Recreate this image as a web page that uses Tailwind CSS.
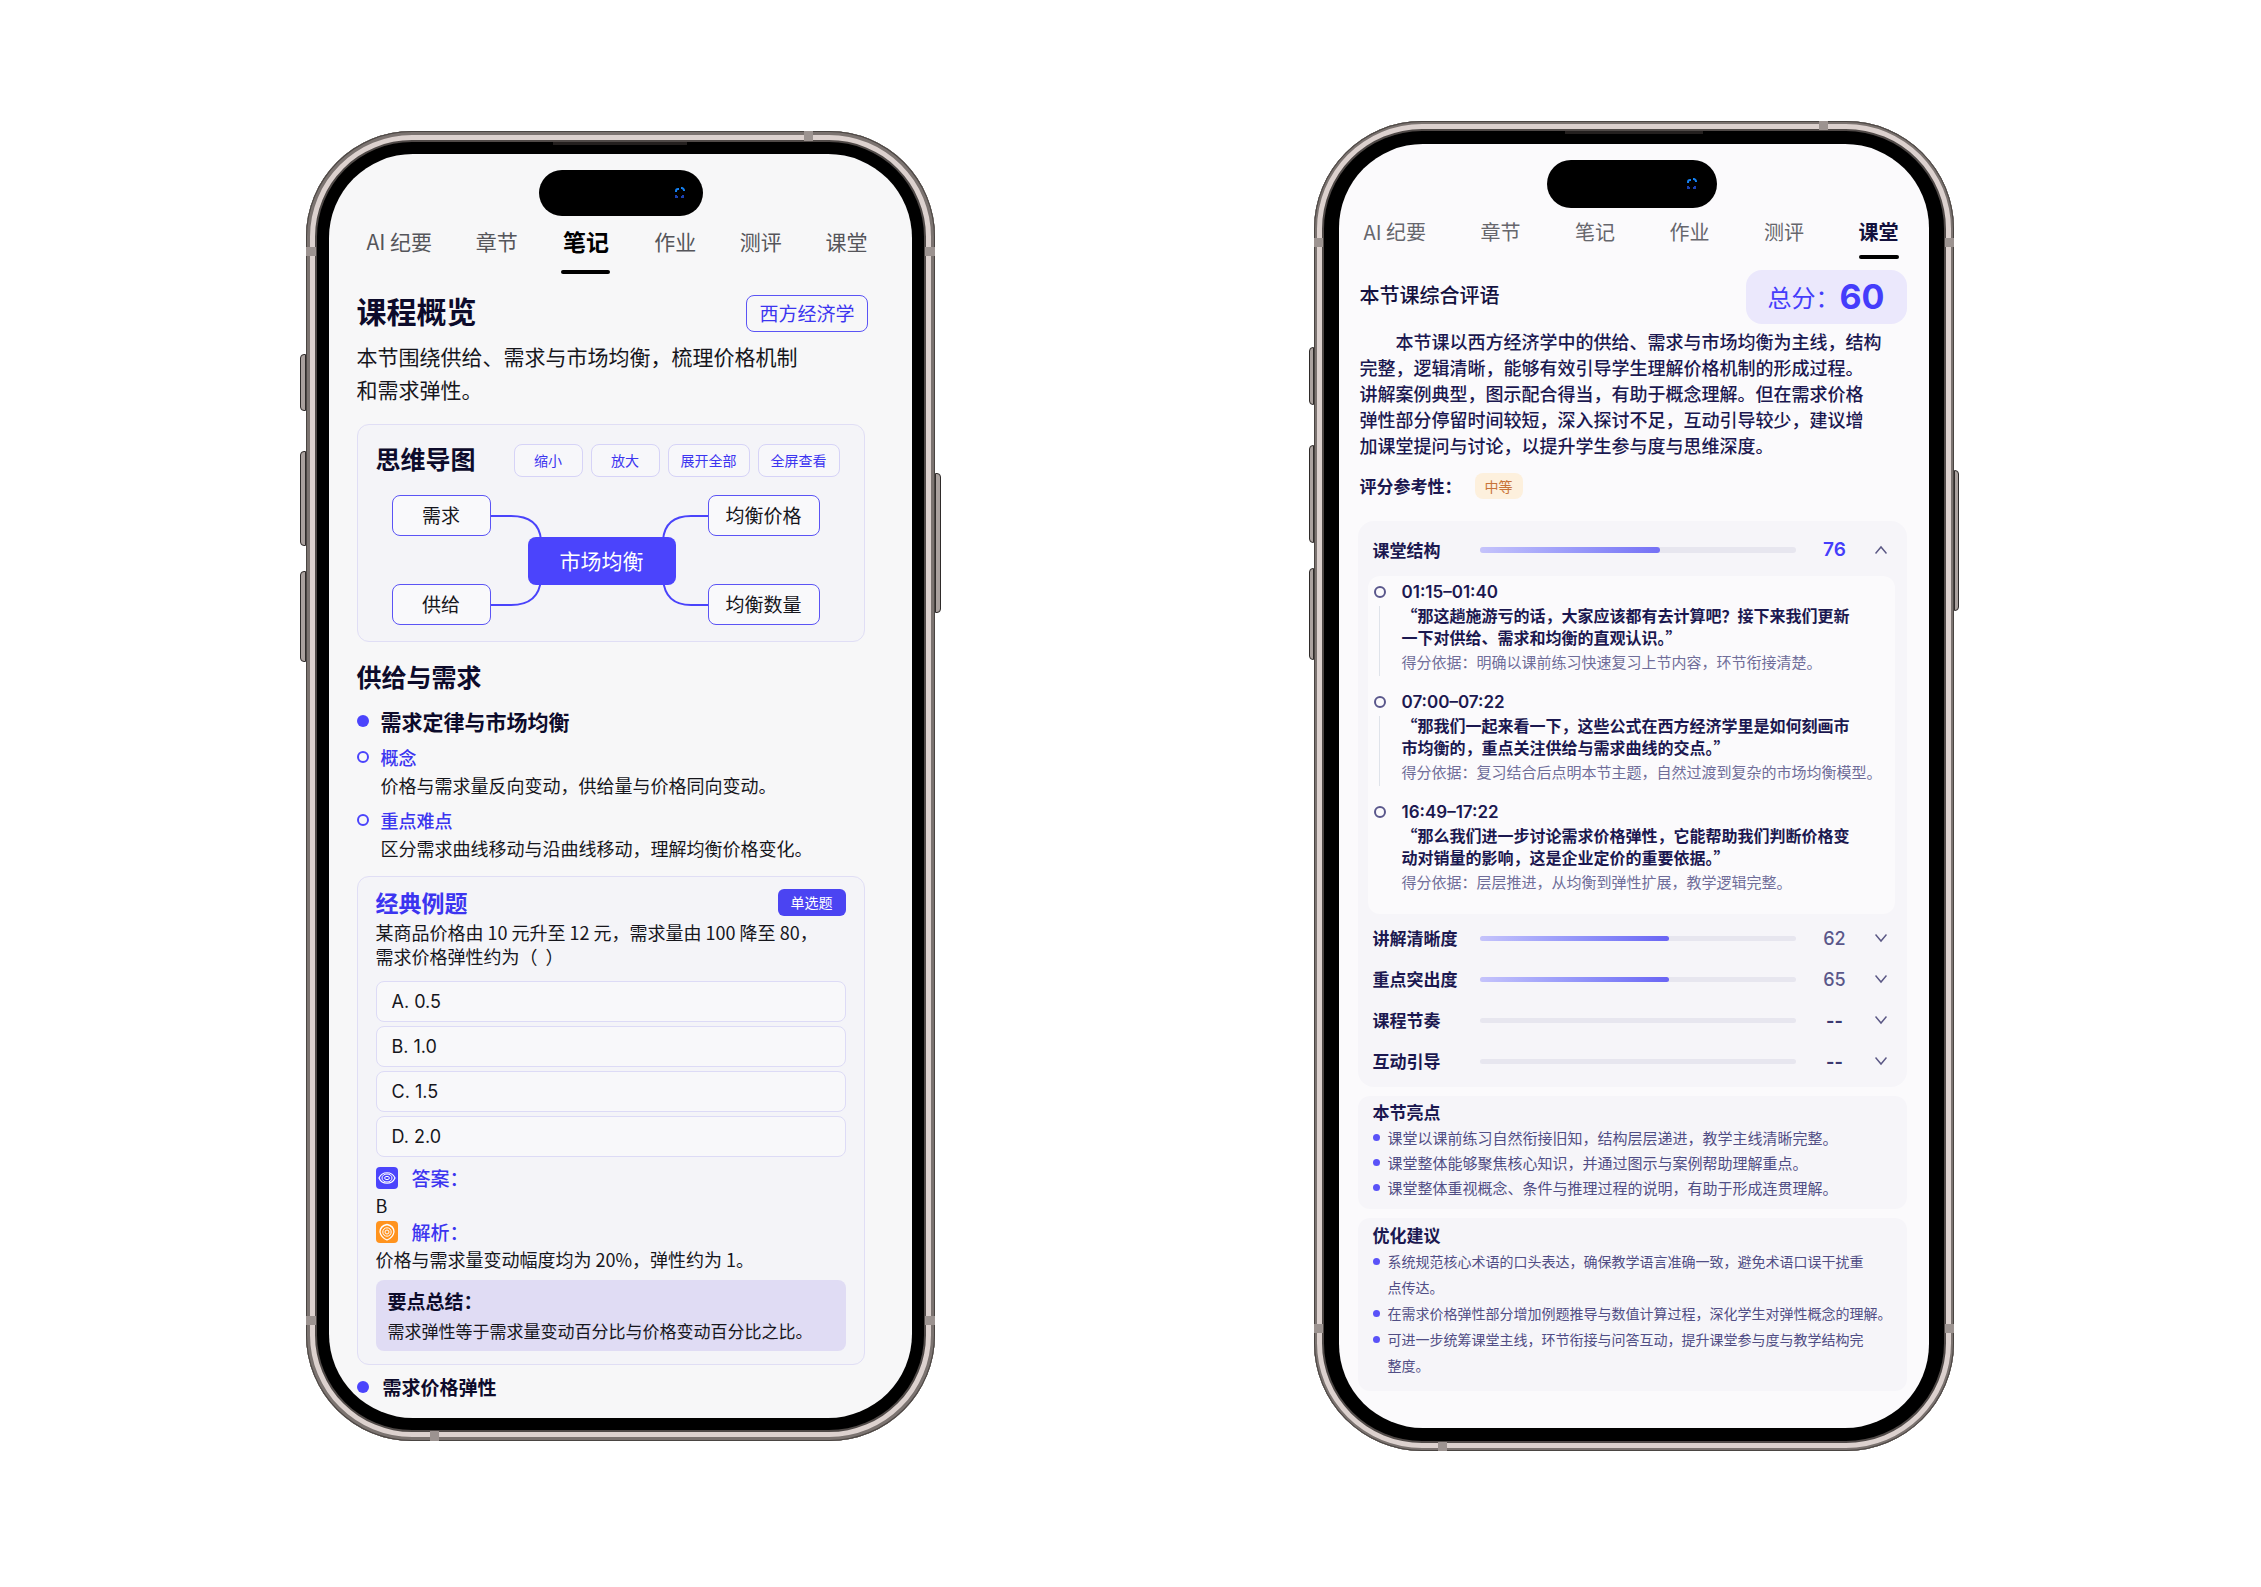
<!DOCTYPE html>
<html lang="zh-CN">
<head>
<meta charset="UTF-8">
<meta name="viewport" content="width=device-width, initial-scale=1.0">
<title>课程笔记与课堂测评</title>
<script src="https://cdn.jsdelivr.net/npm/@tailwindcss/browser@4"></script>
</head>
<body class="bg-white min-h-screen flex justify-center items-center gap-[379px] pb-4 pr-0.5 font-['Noto_Sans_CJK_SC',sans-serif] text-[#16161c]">

<!-- Phone 1: notes -->
<div class="relative w-[629px] shrink-0 rounded-[106px] bg-black p-[23px] shadow-[inset_0_0_0_1px_#4a4542,inset_0_0_0_4px_#7b7370,inset_0_0_0_9px_#dcd1ce,inset_0_0_0_11px_#4f4947]">
  <span class="absolute -left-[6px] top-[223px] w-[6px] h-[57px] rounded-l border border-[#2f2b2a] bg-[#aaa19e]"></span>
  <span class="absolute -left-[6px] top-[320px] w-[6px] h-[95px] rounded-l border border-[#2f2b2a] bg-[#aaa19e]"></span>
  <span class="absolute -left-[6px] top-[440px] w-[6px] h-[91px] rounded-l border border-[#2f2b2a] bg-[#aaa19e]"></span>
  <span class="absolute -right-[6px] top-[342px] w-[6px] h-[140px] rounded-r border border-[#2f2b2a] bg-[#aaa19e]"></span>
  <!-- antenna lines -->
  <span class="absolute left-0 top-[116px] w-[10px] h-[9px] bg-[#9c9390]"></span>
  <span class="absolute right-0 top-[116px] w-[10px] h-[9px] bg-[#9c9390]"></span>
  <span class="absolute left-0 bottom-[116px] w-[10px] h-[9px] bg-[#9c9390]"></span>
  <span class="absolute right-0 bottom-[116px] w-[10px] h-[9px] bg-[#9c9390]"></span>
  <span class="absolute right-[122px] top-0 w-[9px] h-[10px] bg-[#9c9390]"></span>
  <span class="absolute left-[124px] bottom-0 w-[9px] h-[10px] bg-[#9c9390]"></span>
  <span class="absolute left-1/2 -translate-x-1/2 top-[11px] w-[134px] h-[3px] bg-[#24201f]"></span>

  <main class="rounded-[84px] bg-[#f7f7f8] pt-4 pb-[17px] pl-7 pr-11">
    <div class="w-[164px] h-[46px] ml-[182px] rounded-full bg-black flex items-center justify-end pr-4">
      <svg class="size-[14px]" viewBox="0 0 14 14" fill="none" stroke="#1480f0" stroke-width="2">
        <path d="M3 6V5a2 2 0 0 1 2-2h1M8 2h1a3 3 0 0 1 2 2v1"/>
        <path d="M3 9v2h2M8 11h2V9" stroke="#1a3fb0"/>
      </svg>
    </div>

    <nav class="mt-[10px] pl-[10px] flex justify-between items-start text-[21px] leading-[30px] text-[#55555a]">
      <button class="cursor-pointer">AI 纪要</button>
      <button class="cursor-pointer">章节</button>
      <button class="flex flex-col items-center text-[23px] font-bold text-black cursor-pointer">笔记<i class="block mt-[14px] w-[49px] h-1 rounded-full bg-black"></i></button>
      <button class="cursor-pointer">作业</button>
      <button class="cursor-pointer">测评</button>
      <button class="cursor-pointer">课堂</button>
    </nav>

    <div class="mt-[21px] flex justify-between items-start">
      <h1 class="text-[30px] leading-[30px] font-bold text-[#0d0b2b]">课程概览</h1>
      <span class="px-3 h-[37px] rounded-lg border border-[#5b54f5] text-[19px] leading-[34px] text-[#3c35f0]">西方经济学</span>
    </div>
    <p class="mt-2 text-[21px] leading-[33px]">本节围绕供给、需求与市场均衡，梳理价格机制<br>和需求弹性。</p>

    <!-- Mind map -->
    <section class="mt-[18px] mr-[3px] rounded-xl border border-[#e0def5] bg-[#f4f4f8] pt-[19px] pb-4">
      <div class="flex items-start justify-between pl-[18px] pr-6">
        <h2 class="text-[25px] leading-[28px] font-bold text-[#0d0b2b]">思维导图</h2>
        <div class="flex gap-2 text-[14px] leading-[30px] text-[#3c35f0]">
          <button class="w-[69px] h-[33px] rounded-lg border border-[#d6d3f7] bg-[#f7f7fa] cursor-pointer">缩小</button>
          <button class="w-[69px] h-[33px] rounded-lg border border-[#d6d3f7] bg-[#f7f7fa] cursor-pointer">放大</button>
          <button class="w-[82px] h-[33px] rounded-lg border border-[#d6d3f7] bg-[#f7f7fa] cursor-pointer">展开全部</button>
          <button class="w-[82px] h-[33px] rounded-lg border border-[#d6d3f7] bg-[#f7f7fa] cursor-pointer">全屏查看</button>
        </div>
      </div>
      <div class="relative mt-[18px] ml-[34px] w-[428px] h-[130px] text-[19px] leading-[37px] text-center">
        <svg class="absolute inset-0" width="428" height="130" viewBox="0 0 428 130" fill="none" stroke="#4a43fb" stroke-width="2">
          <path d="M99 21h20q28 0 30 24M99 110h20q28 0 30-26M317 21h-18q-26 0-28 24M317 110h-18q-26 0-28-26"/>
        </svg>
        <span class="absolute left-0 top-0 w-[99px] h-[41px] rounded-lg border border-[#5b54f5] bg-[#f9f9fb]">需求</span>
        <span class="absolute left-0 bottom-0 w-[99px] h-[41px] rounded-lg border border-[#5b54f5] bg-[#f9f9fb]">供给</span>
        <span class="absolute right-0 top-0 w-[112px] h-[41px] rounded-lg border border-[#5b54f5] bg-[#f9f9fb]">均衡价格</span>
        <span class="absolute right-0 bottom-0 w-[112px] h-[41px] rounded-lg border border-[#5b54f5] bg-[#f9f9fb]">均衡数量</span>
        <span class="absolute left-[136px] top-[42px] w-[148px] h-[48px] rounded-lg bg-[#4b44fc] text-[21px] leading-[46px] text-white">市场均衡</span>
      </div>
    </section>

    <!-- Knowledge points -->
    <h2 class="mt-4 text-[25px] leading-[36px] font-bold text-[#0d0b2b]">供给与需求</h2>
    <h3 class="mt-3 flex items-center gap-3 text-[21px] leading-[30px] font-bold text-[#0d0b2b]"><i class="size-3 rounded-full bg-[#4b44fc]"></i>需求定律与市场均衡</h3>
    <h4 class="mt-[7px] flex items-center gap-3 text-[18px] leading-[28px] font-medium text-[#3c35f0]"><i class="size-3 rounded-full border-2 border-[#4b44fc]"></i>概念</h4>
    <p class="pl-6 text-[18px] leading-[28px] whitespace-nowrap">价格与需求量反向变动，供给量与价格同向变动。</p>
    <h4 class="mt-[7px] flex items-center gap-3 text-[18px] leading-[28px] font-medium text-[#3c35f0]"><i class="size-3 rounded-full border-2 border-[#4b44fc]"></i>重点难点</h4>
    <p class="pl-6 text-[18px] leading-[28px] whitespace-nowrap">区分需求曲线移动与沿曲线移动，理解均衡价格变化。</p>

    <!-- Example question -->
    <section class="mt-[14px] mr-[3px] rounded-xl border border-[#e0def5] bg-[#f4f4f8] pt-3 pb-[13px] px-[18px] text-[18px]">
      <div class="flex items-start justify-between">
        <h2 class="text-[23px] leading-[26px] font-bold text-[#3c35f0]">经典例题</h2>
        <span class="w-[68px] h-[27px] rounded-md bg-[#4b44f2] text-center text-[14px] leading-[26px] text-white">单选题</span>
      </div>
      <p class="mt-1 leading-[24px] whitespace-nowrap">某商品价格由 10 元升至 12 元，需求量由 100 降至 80，<br>需求价格弹性约为（&nbsp; ）</p>
      <div class="mt-[13px] flex flex-col gap-1 font-['Inter'] leading-[39px]">
        <label class="relative h-[41px] pl-[15px] rounded-lg border border-[#dddbf6] bg-[#f8f8fa] cursor-pointer"><input type="radio" name="answer" class="sr-only">A. 0.5</label>
        <label class="relative h-[41px] pl-[15px] rounded-lg border border-[#dddbf6] bg-[#f8f8fa] cursor-pointer"><input type="radio" name="answer" class="sr-only">B. 1.0</label>
        <label class="relative h-[41px] pl-[15px] rounded-lg border border-[#dddbf6] bg-[#f8f8fa] cursor-pointer"><input type="radio" name="answer" class="sr-only">C. 1.5</label>
        <label class="relative h-[41px] pl-[15px] rounded-lg border border-[#dddbf6] bg-[#f8f8fa] cursor-pointer"><input type="radio" name="answer" class="sr-only">D. 2.0</label>
      </div>
      <h3 class="mt-[7px] flex items-center gap-[14px] text-[19px] leading-[28px] font-medium text-[#3c35f0]">
        <svg class="size-[22px]" viewBox="0 0 22 22" fill="none" stroke="#fff">
          <rect width="22" height="22" rx="4" fill="#4b44fc" stroke="none"/>
          <path d="M3 11c3-7 13-7 16 0-3 7-13 7-16 0z" stroke-width="1.2"/>
          <ellipse cx="11" cy="11" rx="5" ry="4"/>
          <ellipse cx="11" cy="11" rx="2.4" ry="1.6"/>
        </svg>
        答案：
      </h3>
      <p class="leading-[26px]">B</p>
      <h3 class="flex items-center gap-[14px] text-[19px] leading-[28px] font-medium text-[#3c35f0]">
        <svg class="size-[22px]" viewBox="0 0 22 22" fill="none" stroke="#fff">
          <rect width="22" height="22" rx="4" fill="#ff931e" stroke="none"/>
          <path d="M11 3.500q7 1.500 7 7.500-1 5.500-7 8-6-2.500-7-8 0-6 7-7.500z" stroke-width="1.300"/>
          <circle cx="11" cy="11" r="4.200"/>
          <circle cx="11" cy="11" r="2"/>
        </svg>
        解析：
      </h3>
      <p class="leading-[26px] whitespace-nowrap">价格与需求量变动幅度均为 20%，弹性约为 1。</p>
      <div class="mt-2 rounded-lg bg-[#e0dcf4] pt-2 pb-[7px] px-3">
        <h3 class="text-[19px] leading-[26px] font-bold text-[#0d0b2b]">要点总结：</h3>
        <p class="mt-1 text-[17px] leading-[26px] whitespace-nowrap">需求弹性等于需求量变动百分比与价格变动百分比之比。</p>
      </div>
    </section>
    <h3 class="mt-2 flex items-center gap-[14px] text-[19px] leading-[28px] font-bold text-[#0d0b2b]"><i class="size-3 rounded-full bg-[#4b44fc]"></i>需求价格弹性</h3>
  </main>
</div>

<!-- Phone 2: class evaluation -->
<div class="relative w-[640px] shrink-0 rounded-[108px] bg-black p-[23px] px-[25px] shadow-[inset_0_0_0_1px_#4a4542,inset_0_0_0_3px_#7b7370,inset_0_0_0_8px_#dcd1ce,inset_0_0_0_10px_#4f4947]">
  <span class="absolute -left-[5px] top-[226px] w-[5px] h-[58px] rounded-l border border-[#2f2b2a] bg-[#aaa19e]"></span>
  <span class="absolute -left-[5px] top-[324px] w-[5px] h-[98px] rounded-l border border-[#2f2b2a] bg-[#aaa19e]"></span>
  <span class="absolute -left-[5px] top-[447px] w-[5px] h-[92px] rounded-l border border-[#2f2b2a] bg-[#aaa19e]"></span>
  <span class="absolute -right-[5px] top-[349px] w-[5px] h-[141px] rounded-r border border-[#2f2b2a] bg-[#aaa19e]"></span>
  <!-- antenna lines -->
  <span class="absolute left-0 top-[117px] w-[9px] h-[9px] bg-[#9c9390]"></span>
  <span class="absolute right-0 top-[117px] w-[9px] h-[9px] bg-[#9c9390]"></span>
  <span class="absolute left-0 bottom-[118px] w-[9px] h-[9px] bg-[#9c9390]"></span>
  <span class="absolute right-0 bottom-[118px] w-[9px] h-[9px] bg-[#9c9390]"></span>
  <span class="absolute right-[126px] top-0 w-[9px] h-[9px] bg-[#9c9390]"></span>
  <span class="absolute left-[124px] bottom-0 w-[9px] h-[9px] bg-[#9c9390]"></span>
  <span class="absolute left-1/2 -translate-x-1/2 top-[10px] w-[138px] h-[3px] bg-[#24201f]"></span>

  <main class="rounded-[84px] bg-[#fbfafc] pt-4 pb-[37px] pl-[19px] pr-[22px] text-[#1b1850]">
    <div class="w-[170px] h-12 mx-auto rounded-full bg-black flex items-center justify-end pr-[18px]">
      <svg class="size-[14px]" viewBox="0 0 14 14" fill="none" stroke="#1480f0" stroke-width="2">
        <path d="M3 6V5a2 2 0 0 1 2-2h1M8 2h1a3 3 0 0 1 2 2v1"/>
        <path d="M3 9v2h2M8 11h2V9" stroke="#1a3fb0"/>
      </svg>
    </div>

    <nav class="mt-[10px] pl-[6px] pr-2 flex justify-between items-start text-[20px] leading-[28px] text-[#66666c]">
      <button class="cursor-pointer">AI 纪要</button>
      <button class="cursor-pointer">章节</button>
      <button class="cursor-pointer">笔记</button>
      <button class="cursor-pointer">作业</button>
      <button class="cursor-pointer">测评</button>
      <button class="flex flex-col font-bold text-[#12103c] cursor-pointer">课堂<i class="block mt-[9px] w-full h-1 rounded-full bg-black"></i></button>
    </nav>

    <div class="mt-[11px] pl-[2px] flex justify-between items-start">
      <h1 class="text-[20px] leading-[50px] font-medium text-[#14113f]">本节课综合评语</h1>
      <div class="w-[161px] h-[54px] rounded-2xl bg-[#ebe8fc] flex items-center justify-center text-[24px] text-[#453dfb]">总分：<b class="font-['Inter'] text-[34px] font-bold">60</b></div>
    </div>
    <p class="mt-1 pl-[2px] indent-[2em] text-[18px] leading-[26px] font-medium whitespace-nowrap">本节课以西方经济学中的供给、需求与市场均衡为主线，结构<br>完整，逻辑清晰，能够有效引导学生理解价格机制的形成过程。<br>讲解案例典型，图示配合得当，有助于概念理解。但在需求价格<br>弹性部分停留时间较短，深入探讨不足，互动引导较少，建议增<br>加课堂提问与讨论，以提升学生参与度与思维深度。</p>
    <div class="mt-[15px] pl-[2px] flex items-center gap-7 text-[17px] leading-[26px] font-bold"><span class="w-[87px] whitespace-nowrap">评分参考性：</span><span class="w-12 rounded-lg bg-[#fdf0dd] text-center text-[14px] font-normal text-[#c8743a]">中等</span></div>

    <!-- Scores -->
    <section class="mt-[22px] rounded-2xl bg-[#f6f5f9] px-[10px] pt-1 pb-[5px]">
      <button class="w-full h-[51px] pl-[5px] pr-[10px] flex items-center cursor-pointer">
        <span class="w-[107px] text-left text-[17px] font-bold">课堂结构</span>
        <span class="w-[316px] h-[6px] rounded-full bg-[#e7e6ef]"><i class="block h-full rounded-full bg-linear-to-r from-[#c5c3fb] to-[#7570f5]" style="width:57%"></i></span>
        <span class="ml-auto w-10 text-center font-['Inter'] text-[19px] font-semibold text-[#453dfb]">76</span>
        <svg class="ml-5 size-3" viewBox="0 0 12 12" fill="none" stroke="#5b5885" stroke-width="1.500"><path d="M0.500 9.500 6 3l5.500 6.500"/></svg>
      </button>

      <ul class="mr-[2px] rounded-xl bg-[#fbfafc] pt-1 pb-[18px] pl-[6px] flex flex-col gap-[14px] whitespace-nowrap">
        <li class="flex gap-4">
          <div class="flex flex-col items-center pt-[6px]"><i class="size-3 rounded-full border-2 border-[#5a578c]"></i><i class="mt-2 w-px grow bg-[#dfe3ea]"></i></div>
          <div>
            <h3 class="font-['Inter'] text-[17px] leading-[24px] font-semibold">01:15–01:40</h3>
            <p class="text-[16px] leading-[22px] font-bold">“那这趟施游亏的话，大家应该都有去计算吧？接下来我们更新<br>一下对供给、需求和均衡的直观认识。”</p>
            <p class="text-[15px] leading-[28px] text-[#6f6d99]">得分依据：明确以课前练习快速复习上节内容，环节衔接清楚。</p>
          </div>
        </li>
        <li class="flex gap-4">
          <div class="flex flex-col items-center pt-[6px]"><i class="size-3 rounded-full border-2 border-[#5a578c]"></i><i class="mt-2 w-px grow bg-[#dfe3ea]"></i></div>
          <div>
            <h3 class="font-['Inter'] text-[17px] leading-[24px] font-semibold">07:00–07:22</h3>
            <p class="text-[16px] leading-[22px] font-bold">“那我们一起来看一下，这些公式在西方经济学里是如何刻画市<br>市均衡的，重点关注供给与需求曲线的交点。”</p>
            <p class="text-[15px] leading-[28px] text-[#6f6d99]">得分依据：复习结合后点明本节主题，自然过渡到复杂的市场均衡模型。</p>
          </div>
        </li>
        <li class="flex gap-4">
          <div class="pt-[6px]"><i class="block size-3 rounded-full border-2 border-[#5a578c]"></i></div>
          <div>
            <h3 class="font-['Inter'] text-[17px] leading-[24px] font-semibold">16:49–17:22</h3>
            <p class="text-[16px] leading-[22px] font-bold">“那么我们进一步讨论需求价格弹性，它能帮助我们判断价格变<br>动对销量的影响，这是企业定价的重要依据。”</p>
            <p class="text-[15px] leading-[28px] text-[#6f6d99]">得分依据：层层推进，从均衡到弹性扩展，教学逻辑完整。</p>
          </div>
        </li>
      </ul>

      <div class="pt-1">
        <button class="w-full h-[41px] pl-[5px] pr-[10px] flex items-center cursor-pointer">
          <span class="w-[107px] text-left text-[17px] font-bold">讲解清晰度</span>
          <span class="w-[316px] h-[5px] rounded-full bg-[#e7e6ef]"><i class="block h-full rounded-full bg-linear-to-r from-[#c5c3fb] to-[#6a64f4]" style="width:60%"></i></span>
          <span class="ml-auto w-10 text-center font-['Inter'] text-[18px] font-medium text-[#5a578a]">62</span>
          <svg class="ml-5 size-3" viewBox="0 0 12 12" fill="none" stroke="#5b5885" stroke-width="1.500"><path d="M0.500 2.500 6 9l5.500-6.500"/></svg>
        </button>
        <button class="w-full h-[41px] pl-[5px] pr-[10px] flex items-center cursor-pointer">
          <span class="w-[107px] text-left text-[17px] font-bold">重点突出度</span>
          <span class="w-[316px] h-[5px] rounded-full bg-[#e7e6ef]"><i class="block h-full rounded-full bg-linear-to-r from-[#c5c3fb] to-[#6a64f4]" style="width:60%"></i></span>
          <span class="ml-auto w-10 text-center font-['Inter'] text-[18px] font-medium text-[#5a578a]">65</span>
          <svg class="ml-5 size-3" viewBox="0 0 12 12" fill="none" stroke="#5b5885" stroke-width="1.500"><path d="M0.500 2.500 6 9l5.500-6.500"/></svg>
        </button>
        <button class="w-full h-[41px] pl-[5px] pr-[10px] flex items-center cursor-pointer">
          <span class="w-[107px] text-left text-[17px] font-bold">课程节奏</span>
          <span class="w-[316px] h-[5px] rounded-full bg-[#e7e6ef]"></span>
          <span class="ml-auto w-10 text-center font-['Inter'] text-[18px] font-bold text-[#3b3870]">--</span>
          <svg class="ml-5 size-3" viewBox="0 0 12 12" fill="none" stroke="#5b5885" stroke-width="1.500"><path d="M0.500 2.500 6 9l5.500-6.500"/></svg>
        </button>
        <button class="w-full h-[41px] pl-[5px] pr-[10px] flex items-center cursor-pointer">
          <span class="w-[107px] text-left text-[17px] font-bold">互动引导</span>
          <span class="w-[316px] h-[5px] rounded-full bg-[#e7e6ef]"></span>
          <span class="ml-auto w-10 text-center font-['Inter'] text-[18px] font-bold text-[#3b3870]">--</span>
          <svg class="ml-5 size-3" viewBox="0 0 12 12" fill="none" stroke="#5b5885" stroke-width="1.500"><path d="M0.500 2.500 6 9l5.500-6.500"/></svg>
        </button>
      </div>
    </section>

    <!-- Highlights -->
    <section class="mt-[9px] rounded-xl bg-[#f6f5f9] pt-[3px] pb-[9px] pl-[15px]">
      <h2 class="text-[17px] leading-[26px] font-bold">本节亮点</h2>
      <ul class="text-[15px] leading-[25px] text-[#514e85] whitespace-nowrap">
        <li class="flex items-center gap-2"><i class="size-[7px] rounded-full bg-[#5a52f8]"></i>课堂以课前练习自然衔接旧知，结构层层递进，教学主线清晰完整。</li>
        <li class="flex items-center gap-2"><i class="size-[7px] rounded-full bg-[#5a52f8]"></i>课堂整体能够聚焦核心知识，并通过图示与案例帮助理解重点。</li>
        <li class="flex items-center gap-2"><i class="size-[7px] rounded-full bg-[#5a52f8]"></i>课堂整体重视概念、条件与推理过程的说明，有助于形成连贯理解。</li>
      </ul>
    </section>

    <!-- Suggestions -->
    <section class="mt-[9px] rounded-xl bg-[#f6f5f9] pt-1 pb-[13px] pl-[15px]">
      <h2 class="text-[17px] leading-[26px] font-bold">优化建议</h2>
      <ul class="text-[14px] leading-[26px] text-[#514e85] whitespace-nowrap">
        <li class="flex items-start gap-2"><i class="mt-[10px] size-[7px] rounded-full bg-[#5a52f8]"></i><span>系统规范核心术语的口头表达，确保教学语言准确一致，避免术语口误干扰重<br>点传达。</span></li>
        <li class="flex items-start gap-2"><i class="mt-[10px] size-[7px] rounded-full bg-[#5a52f8]"></i><span>在需求价格弹性部分增加例题推导与数值计算过程，深化学生对弹性概念的理解。</span></li>
        <li class="flex items-start gap-2"><i class="mt-[10px] size-[7px] rounded-full bg-[#5a52f8]"></i><span>可进一步统筹课堂主线，环节衔接与问答互动，提升课堂参与度与教学结构完<br>整度。</span></li>
      </ul>
    </section>
  </main>
</div>

</body>
</html>
